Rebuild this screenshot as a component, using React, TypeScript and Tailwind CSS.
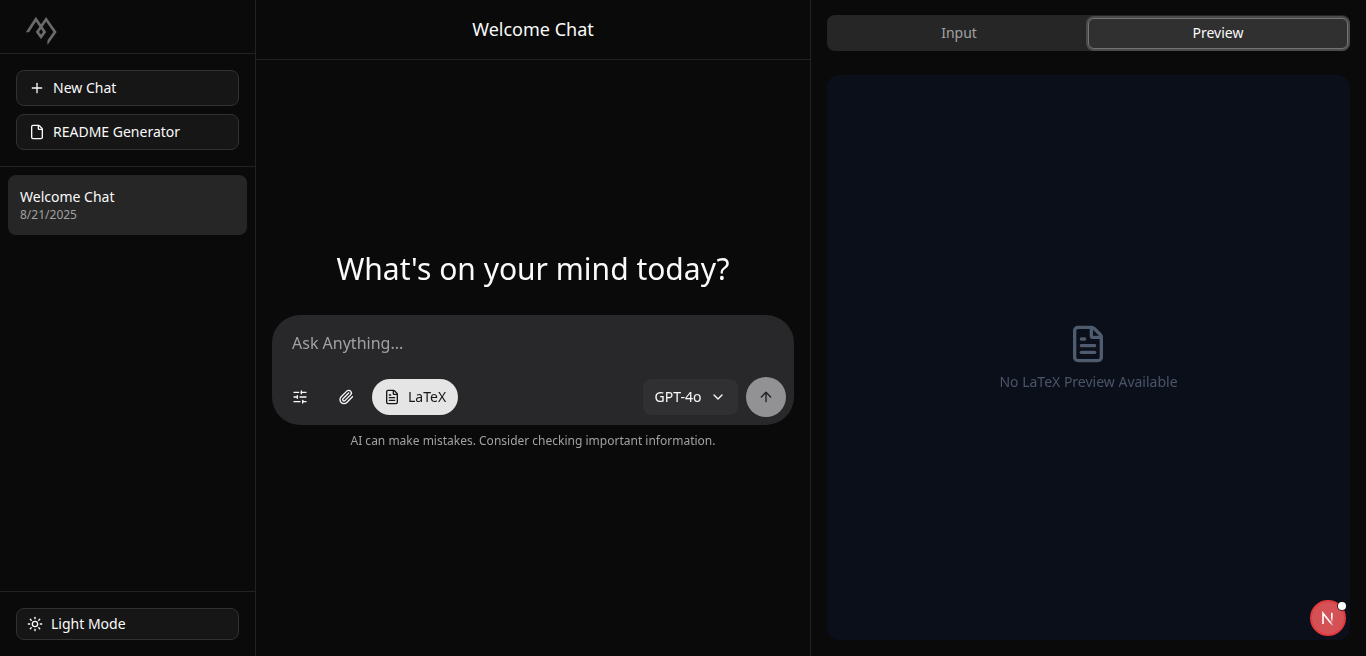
import React from "react";
import {
  ArrowUp,
  ChevronDown,
  File,
  FileText,
  Paperclip,
  Plus,
  SlidersHorizontal,
  Sun,
} from "lucide-react";

function Logo() {
  return (
    <svg width="33" height="30" viewBox="0 0 33 30" fill="none" stroke="#6a6a6a" strokeWidth="2.7">
      <defs>
        <clipPath id="logo-edges">
          <path d="M0 0H33V30H22.4V25H9V17.2H0Z" />
        </clipPath>
      </defs>
      <path
        clipPath="url(#logo-edges)"
        d="M1.8 18.3L10.9 4.3L19.6 17L16 21.9L12.4 17L21.1 4.3L30 17L21.5 29"
      />
    </svg>
  );
}

function Sidebar() {
  return (
    <aside className="flex w-64 shrink-0 flex-col border-r border-[#222222]">
      <div className="h-[54px] border-b border-[#222222] pt-[15px] pl-[25px]">
        <Logo />
      </div>
      <div className="flex flex-col gap-2 border-b border-[#222222] p-4">
        <button className="flex h-9 items-center gap-2 rounded-lg border border-[#323232] bg-[#161616] px-3 text-sm">
          <Plus className="size-4" />
          New Chat
        </button>
        <button className="flex h-9 items-center gap-2 rounded-lg border border-[#323232] bg-[#161616] px-3 text-sm">
          <File className="size-4" />
          README Generator
        </button>
      </div>
      <div className="flex-1 p-2">
        <div className="flex h-[60px] flex-col rounded-lg bg-[#262626] p-3">
          <span className="text-sm">Welcome Chat</span>
          <span className="text-xs text-[#a1a1a1]">8/21/2025</span>
        </div>
      </div>
      <div className="border-t border-[#222222] p-4">
        <button className="flex h-8 w-full items-center gap-2 rounded-lg border border-[#323232] bg-[#161616] px-2.5 text-sm">
          <Sun className="size-4" />
          Light Mode
        </button>
      </div>
    </aside>
  );
}

function Composer() {
  return (
    <div className="flex h-[110px] w-full flex-col justify-between rounded-[28px] bg-[#28282a] p-2">
      <div className="px-3 pt-2 text-base text-[#a1a1a1]">Ask Anything...</div>
      <div className="flex items-center justify-between">
        <div className="flex items-center">
          <button className="flex h-9 w-10 items-center justify-center">
            <SlidersHorizontal className="size-4" />
          </button>
          <button className="ml-1.5 flex h-9 w-10 items-center justify-center">
            <Paperclip className="size-4" />
          </button>
          <button className="ml-1.5 flex h-9 w-[86px] items-center gap-2 rounded-full bg-[#e5e5e5] pl-3 text-sm text-[#171717]">
            <FileText className="size-4" />
            LaTeX
          </button>
        </div>
        <div className="flex items-center gap-2">
          <button className="flex h-9 w-[95px] items-center justify-between rounded-lg bg-[#303032] pr-3 pl-[11.5px] text-sm">
            GPT-4o
            <ChevronDown className="size-4" />
          </button>
          <button className="flex size-10 items-center justify-center rounded-full bg-[#929294] text-[#1e1e1e]">
            <ArrowUp className="size-4" />
          </button>
        </div>
      </div>
    </div>
  );
}

function Chat() {
  return (
    <main className="flex w-[555px] shrink-0 flex-col border-r border-[#222222]">
      <header className="flex h-[60px] items-center justify-center border-b border-[#222222]">
        <h1 className="pb-px text-lg">Welcome Chat</h1>
      </header>
      <div className="flex flex-1 flex-col items-center px-4 pt-[191px] will-change-transform">
        <h2 className="mb-7 text-3xl">What&apos;s on your mind today?</h2>
        <Composer />
        <p className="mt-2 text-xs text-[#a1a1a1]">
          AI can make mistakes. Consider checking important information.
        </p>
      </div>
    </main>
  );
}

function DevBadge() {
  return (
    <div className="absolute right-5 bottom-5 size-9 rounded-full border-2 border-[#e03a3e] bg-[#d45256]">
      <svg className="absolute top-[9px] left-[8px]" width="15" height="15" viewBox="0 0 15 15" fill="none" strokeWidth="1.6">
        <defs>
          <linearGradient id="stem" x1="0" y1="0" x2="0" y2="1">
            <stop offset="0.5" stopColor="#fff" />
            <stop offset="1" stopColor="#fff" stopOpacity="0" />
          </linearGradient>
          <linearGradient id="diagonal" x1="0" y1="0" x2="1" y2="1">
            <stop offset="0.7" stopColor="#fff" />
            <stop offset="1" stopColor="#fff" stopOpacity="0.2" />
          </linearGradient>
        </defs>
        <path d="M3 13V2.2L12.8 14.4" stroke="url(#diagonal)" />
        <rect x="11" y="1.8" width="1.6" height="9.8" fill="url(#stem)" />
      </svg>
      <span className="absolute top-0 -right-[2px] size-2 rounded-full bg-white shadow-[0_0_0_1px_#171717cc]" />
    </div>
  );
}

function PreviewPanel() {
  return (
    <section className="flex min-w-0 flex-1 flex-col gap-6 px-4 pt-[15px] pb-4">
      <div className="grid h-9 grid-cols-[259px_260px] rounded-lg bg-[#262626] px-[2px] py-[3px] text-sm">
        <button className="flex items-center justify-center pb-0.5 pl-px text-[#a1a1a1]">Input</button>
        <button className="flex h-[31px] items-center justify-center rounded-md border border-[#737373] bg-[#303030] pb-px shadow-[0_0_0_2px_#4b4b4b]">
          Preview
        </button>
      </div>
      <div className="flex flex-1 flex-col items-center justify-center gap-2 rounded-xl bg-[#0b0f19] text-[#4a5568] will-change-transform">
        <FileText className="mr-px size-10 text-[#4f5b6e]" />
        <p className="text-sm">No LaTeX Preview Available</p>
      </div>
    </section>
  );
}

export default function App() {
  return (
    <div className="relative flex h-screen overflow-hidden bg-[#0a0a0a] font-['Noto_Sans',sans-serif] text-[#fafafa]">
      <Sidebar />
      <Chat />
      <PreviewPanel />
      <DevBadge />
    </div>
  );
}
